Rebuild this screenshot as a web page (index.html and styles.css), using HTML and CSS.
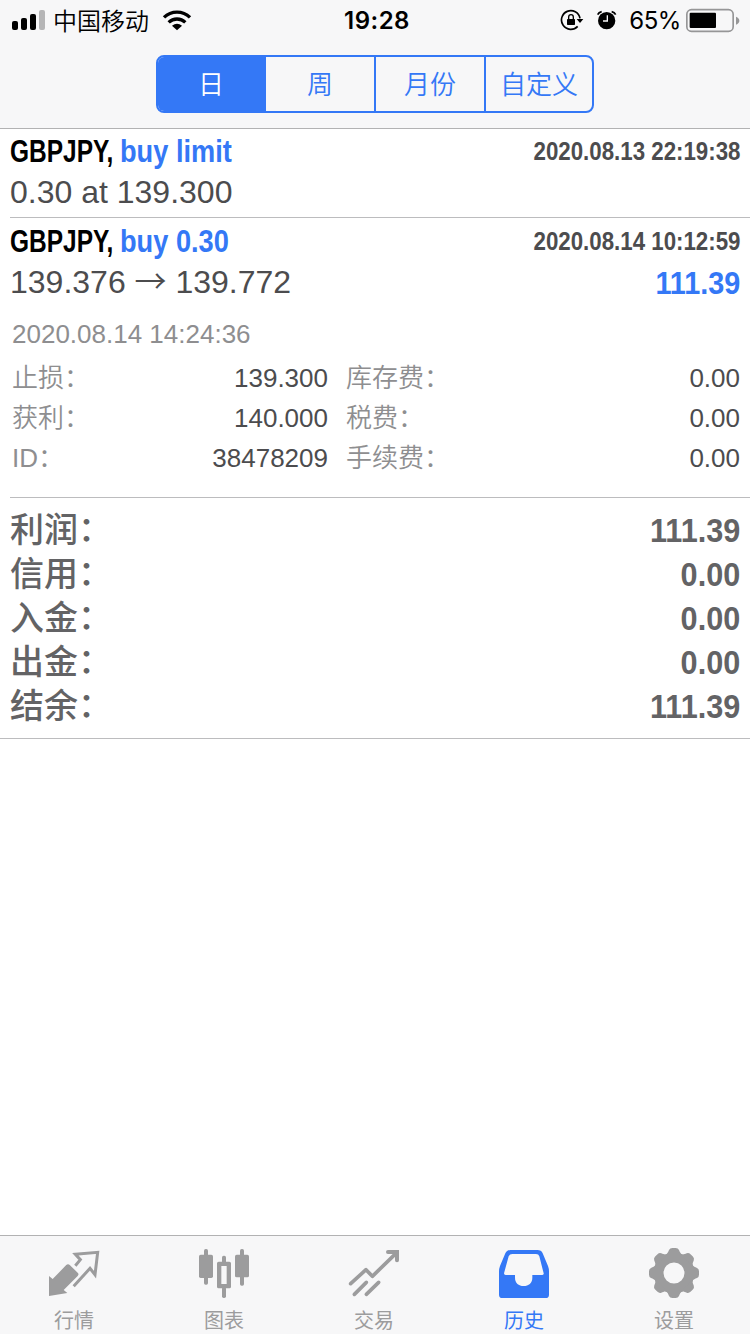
FILE: index.html
```html
<!DOCTYPE html>
<html lang="zh-CN">
<head>
<meta charset="utf-8">
<title>历史</title>
<link rel="stylesheet" href="styles.css">
</head>
<body>
<div class="app">
  <header class="header">
    <div class="status">
      <div class="status-left">
        <svg class="signal" viewBox="36 27 99 66"><rect x="36" y="63" width="18" height="27" rx="6"/><rect x="63" y="54" width="18" height="36" rx="6"/><rect x="90" y="42" width="18" height="48" rx="6"/><rect class="dim" x="117" y="30" width="18" height="60" rx="6"/></svg>
        <span class="carrier">中国移动</span>
        <svg class="wifi" viewBox="486 27 90 66"><path class="arc" d="M492 52A56 56 0 0 1 570 52M506 67A36 36 0 0 1 556 67"/><path d="M516 77Q531 66 546 77L531 91Z"/></svg>
      </div>
      <time class="clock">19:28</time>
      <div class="status-right">
        <svg class="rotation" viewBox="180 27 72 66"><path class="line" d="M233 79A28 28 0 1 1 240 55"/><path d="M230 57H250L240 69Z"/><rect x="201" y="57" width="24" height="18" rx="2"/><path class="shackle" d="M206 58V51A7 7 0 0 1 220 51V58"/></svg>
        <svg class="alarm" viewBox="288 27 63 66"><circle cx="320" cy="62" r="26"/><path class="ear" d="M293 44Q296 37 305 35M347 44Q344 37 335 35"/><path class="hand" d="M322 46V63H309"/></svg>
        <span class="percent">65%</span>
        <svg class="battery" viewBox="558 24 162 75"><rect class="case" x="560.5" y="29" width="139" height="65" rx="14"/><rect x="569" y="38" width="79" height="46" rx="3"/><path class="nub" d="M708 50Q718 54 718 62T708 74Z"/></svg>
      </div>
    </div>
    <nav class="segments">
      <span class="segment selected">日</span><span class="segment">周</span><span class="segment">月份</span><span class="segment">自定义</span>
    </nav>
  </header>

  <main class="content">
    <section class="order">
      <div class="row"><div class="name"><b class="symbol">GBPJPY,</b><b class="kind">buy limit</b></div><b class="stamp">2020.08.13 22:19:38</b></div>
      <div class="row price">0.30 at 139.300</div>
    </section>
    <section class="order expanded">
      <div class="row"><div class="name"><b class="symbol">GBPJPY,</b><b class="kind">buy 0.30</b></div><b class="stamp">2020.08.14 10:12:59</b></div>
      <div class="row price"><span>139.376 <span class="arrow">→</span> 139.772</span><b class="profit">111.39</b></div>
      <div class="closed">2020.08.14 14:24:36</div>
      <div class="details">
        <span class="label">止损：</span><span class="value">139.300</span><span class="label">库存费：</span><span class="value">0.00</span>
        <span class="label">获利：</span><span class="value">140.000</span><span class="label">税费：</span><span class="value">0.00</span>
        <span class="label">ID：</span><span class="value">38478209</span><span class="label">手续费：</span><span class="value">0.00</span>
      </div>
    </section>
    <section class="totals">
      <div class="total"><span>利润<span class="colon">：</span></span><b class="sum">111.39</b></div>
      <div class="total"><span>信用<span class="colon">：</span></span><b class="sum">0.00</b></div>
      <div class="total"><span>入金<span class="colon">：</span></span><b class="sum">0.00</b></div>
      <div class="total"><span>出金<span class="colon">：</span></span><b class="sum">0.00</b></div>
      <div class="total"><span>结余<span class="colon">：</span></span><b class="sum">111.39</b></div>
    </section>
  </main>

  <nav class="tabs">
    <div class="tab">
      <svg class="tab-icon" viewBox="144 51 156 156"><path d="M147 138L158 147L198 106Q204 100 210 106L233 128Q238 133 233 138L191 180L202 189L147 198Z"/><path class="outline" d="M221 169L270 115L285 134L293 67L226 73L241 89L226 107"/></svg>
      <span>行情</span>
    </div>
    <div class="tab">
      <svg class="tab-icon" viewBox="594 51 156 156"><rect x="597" y="74" width="42" height="70" rx="5"/><rect x="612" y="57" width="12" height="107" rx="5"/><rect x="705" y="74" width="42" height="68" rx="5"/><rect x="720" y="57" width="12" height="110" rx="5"/><path fill-rule="evenodd" d="M656 95H688Q693 95 693 100V170Q693 175 688 175H656Q651 175 651 170V100Q651 95 656 95ZM664 108V162H680V108Z"/><rect x="666" y="77" width="12" height="22" rx="5"/><rect x="666" y="170" width="12" height="34" rx="5"/></svg>
      <span>图表</span>
    </div>
    <div class="tab">
      <svg class="tab-icon" viewBox="84 51 156 156"><path class="trend" d="M92 161L138 119L157 139L231 67"/><path class="head" d="M204 66H231V91"/><path class="trend" d="M103 193L139 157M139 193L176 157"/></svg>
      <span>交易</span>
    </div>
    <div class="tab active">
      <svg class="tab-icon" viewBox="534 51 156 156"><path fill-rule="evenodd" d="M572 60H652Q664 60 668 70L684 108Q687 116 687 124V194Q687 204 677 204H547Q537 204 537 194V124Q537 116 540 108L556 70Q560 60 572 60ZM577 72Q569 72 566 79L552 130Q552 135 557 135H585V143C585 159 596 168 611 168S637 159 637 143V135H667Q672 135 671 130L658 79Q656 72 648 72Z"/></svg>
      <span>历史</span>
    </div>
    <div class="tab">
      <svg class="tab-icon" viewBox="-78 -78 156 156"><defs><path id="tooth" d="M-26-54C-18-59-18-63-15-69Q-12-75-5-75H5Q12-75 15-69C18-63 18-59 26-54Z"/></defs><circle class="ring" r="46"/><use href="#tooth"/><use href="#tooth" transform="rotate(45)"/><use href="#tooth" transform="rotate(90)"/><use href="#tooth" transform="rotate(135)"/><use href="#tooth" transform="rotate(180)"/><use href="#tooth" transform="rotate(225)"/><use href="#tooth" transform="rotate(270)"/><use href="#tooth" transform="rotate(315)"/></svg>
      <span>设置</span>
    </div>
  </nav>
</div>
</body>
</html>
```
FILE: styles.css
```css
* { box-sizing: border-box; }
body {
  margin: 0;
  background: #fff;
  color: #4c4c4e;
  font-family: "Liberation Sans", "Noto Sans CJK SC", sans-serif;
}
svg { display: block; flex: none; }
.app { display: flex; flex-direction: column; width: 750px; height: 1334px; overflow: hidden; }

.header { height: 129px; background: #f7f7f8; border-bottom: 1px solid #b2b2b3; }
.status {
  display: grid;
  grid-template-columns: 1fr auto 1fr;
  grid-template-rows: 40px;
  align-items: center;
  height: 40px;
  padding: 0 11px 0 12px;
  color: #000;
}
.status-left, .status-right { display: flex; align-items: center; }
.status-right { justify-content: flex-end; }
.signal { width: 33px; height: 22px; }
.signal .dim { fill: #b5b5b6; }
.carrier { margin-left: 8px; font: 350 24px/40px "Noto Sans CJK SC", sans-serif; }
.wifi { width: 30px; height: 22px; margin-left: 13px; }
.wifi .arc { fill: none; stroke: #000; stroke-width: 10; }
.clock { padding: 2px 0 0 3px; font: 600 24px/40px Inter, sans-serif; letter-spacing: .5px; }
.rotation { width: 24px; height: 22px; }
.rotation .line { fill: none; stroke: #000; stroke-width: 5; }
.rotation .shackle { fill: none; stroke: #000; stroke-width: 4; }
.alarm { width: 21px; height: 22px; margin-left: 12px; }
.alarm .ear { fill: none; stroke: #000; stroke-width: 5; }
.alarm .hand { fill: none; stroke: #f7f7f8; stroke-width: 4; }
.percent { margin-left: 12px; padding-top: 2px; font: 400 24px/40px Inter, sans-serif; letter-spacing: -.4px; }
.battery { width: 54px; height: 25px; margin: 0 -1px 0 5px; }
.battery .case { fill: none; stroke: #969697; stroke-width: 5; }
.battery .nub { fill: #969697; }

.segments {
  display: grid;
  grid-template-columns: 106px 110px 110px 1fr;
  width: 438px;
  height: 58px;
  margin: 15px auto 0;
  border: 2px solid #3478f6;
  border-radius: 8px;
  overflow: hidden;
}
.segment {
  color: #3478f6;
  font: 350 26px/52px "Noto Sans CJK SC", sans-serif;
  text-align: center;
  border-left: 2px solid #3478f6;
}
.segment:first-child { border-left: 0; }
.segment.selected { color: #fff; background: #3478f6; }

.content { flex: 1; }
.order { height: 89px; margin-left: 10px; padding: 2px 10px 0 0; border-bottom: 1px solid #bcbcbe; }
.order.expanded { height: 280px; padding-top: 3px; }
.row { display: flex; align-items: center; justify-content: space-between; height: 41px; white-space: nowrap; }
.name { display: flex; font-size: 32px; }
.symbol { width: 110px; color: #000; transform: scaleX(.765); transform-origin: left; }
.kind { color: #3478f6; transform: scaleX(.85); transform-origin: left; }
.stamp { font-size: 26px; transform: scaleX(.857); transform-origin: right; }
.price { font-size: 32px; }
.expanded .price { height: 40px; }
.arrow { font-family: "Noto Sans CJK SC", sans-serif; font-weight: 350; line-height: 1; }
.profit { padding-top: 2px; color: #3478f6; transform: scaleX(.9); transform-origin: right; }
.closed { margin-top: 12px; padding-left: 2px; color: #8e8e90; font-size: 26px; line-height: 40px; }
.details {
  display: grid;
  grid-template-columns: 120px 196px 120px 1fr;
  grid-auto-rows: 40px;
  margin: 4px 0 0 2px;
  font-size: 26px;
  line-height: 40px;
}
.label { color: #8e8e90; font-weight: 350; white-space: nowrap; }
.details .label:nth-child(4n+3) { padding-left: 18px; }
.value { text-align: right; }

.totals { height: 241px; padding: 10px 10px 0; border-bottom: 1px solid #bcbcbe; color: #636365; }
.total { display: flex; justify-content: space-between; height: 44px; font-size: 34px; font-weight: 500; line-height: 44px; }
.colon { display: inline-block; transform: translateY(-1px); }
.sum { transform: scaleX(.9); transform-origin: right; }

.tabs {
  display: grid;
  grid-template-columns: repeat(5, 150px);
  height: 99px;
  padding-top: 11px;
  background: #f7f7f8;
  border-top: 1px solid #b2b2b3;
}
.tab {
  display: flex;
  flex-direction: column;
  align-items: center;
  gap: 6px;
  padding-right: 2px;
  color: #9c9c9d;
  font: 400 20px/30px "Noto Sans CJK SC", sans-serif;
}
.tab.active { color: #3478f6; }
.tab-icon { width: 52px; height: 52px; fill: currentColor; }
.tab-icon .outline { fill: none; stroke: currentColor; stroke-width: 9; }
.tab-icon .trend { fill: none; stroke: currentColor; stroke-width: 11; stroke-linecap: round; stroke-linejoin: round; }
.tab-icon .head { fill: none; stroke: currentColor; stroke-width: 12; stroke-linecap: round; }
.tab-icon .ring { fill: none; stroke: currentColor; stroke-width: 29; }
```
